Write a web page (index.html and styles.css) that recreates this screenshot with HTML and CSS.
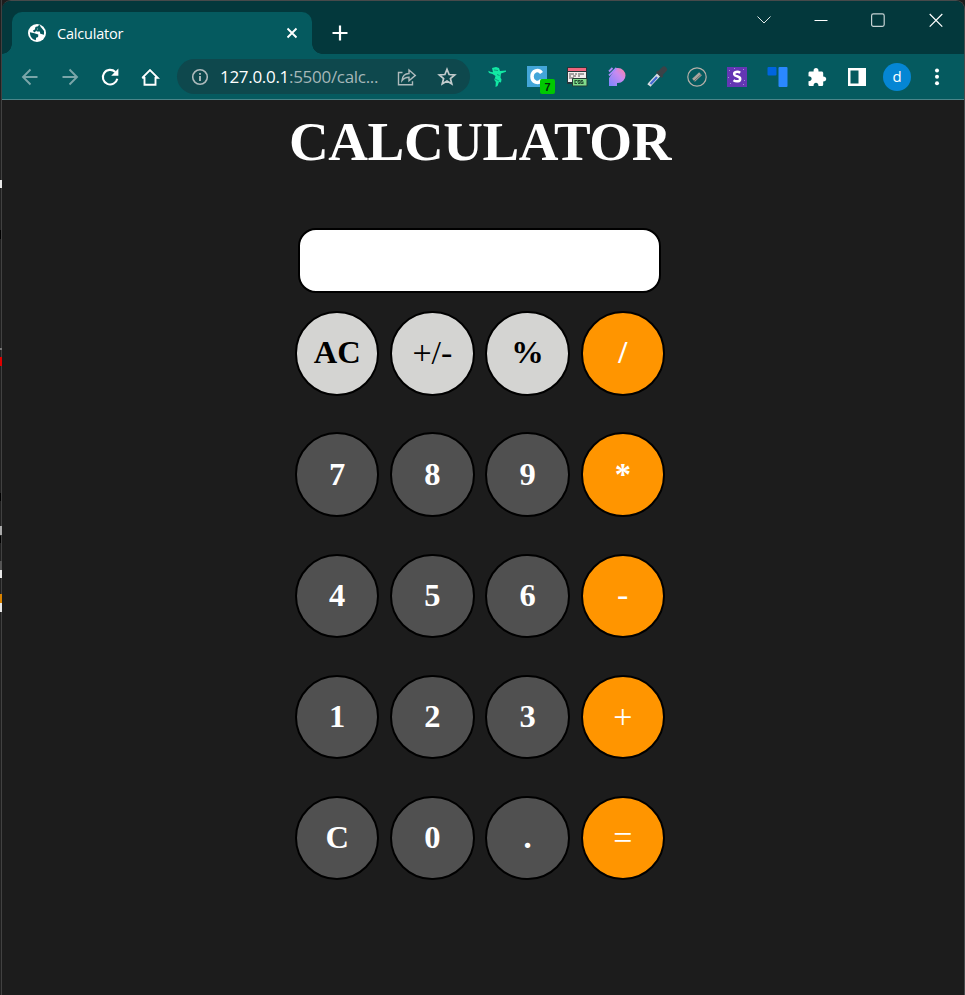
FILE: index.html
```html
<!DOCTYPE html>
<html lang="en">
<head>
<meta charset="utf-8">
<title>Calculator</title>
<link rel="stylesheet" href="styles.css">
</head>
<body>
<div class="edge">
  <svg width="2" height="995" viewBox="0 0 2 995" shape-rendering="crispEdges">
    <path fill="#e8e8e8" d="M0 180h2v8H0zM0 570h2v8H0zM0 603h2v9H0z"/>
    <path fill="#000" d="M0 230h1v9H0zM0 493h1v8H0zM0 536h1v7H0z"/>
    <path fill="#777" d="M0 348h2v2H0z"/>
    <path fill="#e00000" d="M0 357h2v9H0z"/>
    <path fill="#aaa" d="M0 526h2v9H0z"/>
    <path fill="#555" d="M0 561h2v9H0z"/>
    <path fill="#d98200" d="M0 594h2v9H0z"/>
  </svg>
</div>
<div class="window">
  <header class="tabstrip">
    <div class="tab">
      <svg class="globe" width="18" height="18" viewBox="0 0 18 18"><circle cx="9" cy="9" r="9" fill="#fff"/><path fill="none" stroke="#055a5f" stroke-width="2.1" stroke-linejoin="round" d="M12 1.500 10.500 3.200 8.300 3.700 7.800 6.200 5.500 7.500"/><path fill="#055a5f" d="M10 2.200 13 3.300 16 7v3.800l-3.700-1.100-.5-2.300H8.600l1-2.600zM1.900 8.300l4.500 1 3.900 1.300-.2 2.400-2 .7-.3 2.500C4.200 15.500 1.900 12.500 1.900 8.300z"/></svg>
      <span class="tab-title">Calculator</span>
      <svg class="tab-close" width="12" height="12" viewBox="0 0 12 12"><path d="m1.500 1.500 9 9m0-9-9 9" stroke="#fff" stroke-width="1.900"/></svg>
    </div>
    <svg class="new-tab" width="16" height="16" viewBox="0 0 16 16"><path d="M8 .5v15M.5 8h15" stroke="#fff" stroke-width="2.200"/></svg>
    <div class="controls">
      <svg width="14" height="14" viewBox="0 0 14 14"><path d="m.5 3.500 6.500 6.500 6.500-6.500" fill="none" stroke="#e0e8e8"/></svg>
      <svg width="14" height="14" viewBox="0 0 14 14"><path d="M.5 7.500h13" stroke="#fff"/></svg>
      <svg width="14" height="14" viewBox="0 0 14 14"><rect x=".6" y=".9" width="12.600" height="12.400" rx="1.800" fill="none" stroke="#c6d2d3" stroke-width="1.200"/></svg>
      <svg width="14" height="14" viewBox="0 0 14 14"><path d="m.7 1 12.600 12.600m0-12.600L.7 13.600" stroke="#fff" stroke-width="1.200"/></svg>
    </div>
  </header>
  <nav class="toolbar">
    <svg width="20" height="20" viewBox="0 0 20 20"><path d="M17.500 10H3m7.500-7.500L3 10l7.500 7.500" fill="none" stroke="#7ba6a9" stroke-width="1.900"/></svg>
    <svg width="20" height="20" viewBox="0 0 20 20"><path d="M2.500 10H17M9.500 2.500 17 10l-7.500 7.500" fill="none" stroke="#7ba6a9" stroke-width="1.900"/></svg>
    <svg width="20" height="20" viewBox="0 0 20 20"><path d="M15.300 5A7.300 7.300 0 1 0 17.300 11.700" fill="none" stroke="#fff" stroke-width="2.100"/><path d="M18.400 1.600v7.200h-7.200z" fill="#fff"/></svg>
    <svg width="20" height="20" viewBox="0 0 20 20"><path d="M4.500 10v7.700h11V10M2.200 10.800 10 3l7.800 7.800h-2.900M2.200 10.800h2.900" fill="none" stroke="#fff" stroke-width="1.900"/></svg>
    <div class="address">
      <svg width="18" height="18" viewBox="0 0 18 18"><circle cx="9" cy="9" r="7.300" fill="none" stroke="#aebabc" stroke-width="1.600"/><path d="M9 8v5M9 4.900v1.900" stroke="#aebabc" stroke-width="1.900"/></svg>
      <span class="url"><b>127.0.0.1</b>:5500/calc...</span>
      <svg class="share" width="20" height="20" viewBox="0 0 20 20"><path d="M5.500 5.500h-4v12.200h14v-3.500M5 13.500C5.500 9 8 6.500 12 6.500V3l6.300 5.400-6.300 5.400v-3.600c-3 0-5.300 1-7 3.300z" fill="none" stroke="#aebabc" stroke-width="1.400"/></svg>
      <svg width="20" height="20" viewBox="0 0 20 20"><path d="m10 2.300 2.100 5.200 5.600.4-4.300 3.600 1.400 5.500L10 14l-4.800 3 1.400-5.500-4.300-3.600 5.600-.4z" fill="none" stroke="#c2cbcc" stroke-width="1.700"/></svg>
    </div>
    <div class="extensions">
      <svg viewBox="0 0 22 22"><path fill="#12e8a4" d="m6 2 4-1 3 1 1 3 6-.5v1.300l-5 1.700-.5 4 1 2-.5 3-2-.5-1.500 4-2 1 .3-5-1.500-2 1.200-4-3-2-3.500-1-.8-2.200 2.800 1.200 2 .2z"/><path d="m8 4 4 .5m-1 4 2.500 1M9 13l4 2" stroke="#078a75" stroke-width=".8"/></svg>
      <div class="badged">
        <svg viewBox="0 0 22 22"><path fill="#43a5d8" d="M1 0h20v21H1z"/><path d="M15.500 7C12.500 2.500 6 4.500 6 10.500S12.500 18.500 15.500 14" fill="none" stroke="#fff" stroke-width="3.500"/></svg>
        <span class="badge">7</span>
      </div>
      <svg viewBox="0 0 22 22"><path fill="#26373b" d="M1 1h20v17H1z"/><path fill="#ef657d" d="M2 2h18v3H2z"/><path fill="#f4eded" d="M2 6h18v10H2z"/><path d="M3 8h5M9 8h2m1 0h6M3 10h2m2 0h3m2 0h2M3 12h5" stroke="#555" stroke-width="1.200"/><path fill="#81dc8c" stroke="#263c36" d="M6.500 12.500h14.500v7.500H6.500z"/><path d="M11 14.500H9v3h2m3-3h-2v1.500h2v1.500h-2m5-3h-2v1.500h2v1.500h-2" fill="none" stroke="#244f33" stroke-width="1.100"/></svg>
      <svg viewBox="0 0 22 22"><defs><linearGradient id="pen" x1="0" y1="1" x2="1" y2="0"><stop stop-color="#7a86ff"/><stop offset=".6" stop-color="#c98af0"/><stop offset="1" stop-color="#ff829d"/></linearGradient></defs><path fill="url(#pen)" d="M10 2h2a7.500 7.500 0 0 1 0 15h-1v3H3v-8z"/><path d="M3 5.500 6.500 2M3 9.500 10.500 2" stroke="#a98cfa" stroke-width="1.800"/></svg>
      <svg viewBox="0 0 22 22"><path d="m13 8.500-8.500 9-1.500 2" stroke="#d6dbe0" stroke-width="4.200" fill="none"/><path d="m11 11-6.500 7" stroke="#4569d4" stroke-width="2.200"/><path d="m11 5.500 5.500 5.500M13.500 8l4-4" stroke="#3b4247" stroke-width="3"/><path d="m15 6.500 3-3" stroke="#3b4247" stroke-width="6" stroke-linecap="round"/></svg>
      <svg viewBox="0 0 22 22"><circle cx="11" cy="11" r="9.200" fill="none" stroke="#b6afa8" stroke-width="1.200"/><path d="m7.500 14.300 7-6.500" stroke="#aaa49e" stroke-width="4"/><path d="m8 15 7-6.500" stroke="#686965" stroke-width="1"/></svg>
      <svg viewBox="0 0 22 22"><path fill="#6436b4" d="M1 1h20v20H1z"/><path fill="#a58cda" d="M3 4h1v1H3zM17 3h1v1h-1zM18 14h1v1h-1zM4 17h1v1H4zM8 2h1v1H8zM17 18h1v1h-1zM2 11h1v1H2z"/><path d="M14.200 6.800C11.500 5 7.900 6 8.200 8.300c.3 2.500 6 1.500 6 4.600 0 2.700-4 3.200-6.700 1.300" fill="none" stroke="#fff" stroke-width="2.500"/></svg>
      <svg viewBox="0 0 22 22"><rect x="1.500" y="1" width="9" height="8.500" rx="1" fill="#0065df"/><rect x="12.500" y="1" width="9" height="20" rx="1" fill="#2a88ff"/></svg>
      <svg viewBox="0 0 22 22"><path fill="#fff" d="M2.500 7c0-1 .6-1.600 1.600-1.600h3.500C7 1 13 1 12.500 5.400h3c1 0 1.700.7 1.700 1.600v3.400c4 0 4 5 0 5v3c0 1-.7 1.600-1.700 1.600h-3c0-4.200-5-4.200-5 0H4.200c-1 0-1.700-.7-1.700-1.600v-3.200c4.200 0 4.200-5 0-5z"/></svg>
      <svg viewBox="0 0 22 22"><path fill="#fff" fill-rule="evenodd" d="M2 2h18v18H2zM4.500 4.500v13h8v-13z"/></svg>
      <span class="avatar">d</span>
      <svg viewBox="0 0 22 22" fill="#fff"><circle cx="11" cy="4.500" r="2"/><circle cx="11" cy="10.800" r="2"/><circle cx="11" cy="17.200" r="2"/></svg>
    </div>
  </nav>
  <main class="page">
    <h1>CALCULATOR</h1>
    <div class="display"></div>
    <div class="keys">
      <button class="key light">AC</button><button class="key light thin">+/-</button><button class="key light">%</button><button class="key op">/</button>
      <button class="key">7</button><button class="key">8</button><button class="key">9</button><button class="key op">*</button>
      <button class="key">4</button><button class="key">5</button><button class="key">6</button><button class="key op thin">-</button>
      <button class="key">1</button><button class="key">2</button><button class="key">3</button><button class="key op thin">+</button>
      <button class="key">C</button><button class="key">0</button><button class="key">.</button><button class="key op thin">=</button>
    </div>
  </main>
</div>
</body>
</html>
```
FILE: styles.css
```css
* { box-sizing: border-box; }
body {
  margin: 0;
  height: 995px;
  display: flex;
  overflow: hidden;
  background: #1d1d1d;
}
svg { display: block; flex: none; }
.edge {
  width: 2px;
  height: 995px;
  flex: none;
  background: linear-gradient(90deg, #202020 50%, #414141 50%);
}
.window {
  width: 963px;
  height: 995px;
  border-top: 1px solid #474a4b;
  border-right: 1px solid #474a4b;
  border-radius: 9px 9px 0 0;
  overflow: hidden;
  background: #1c1c1c;
  font-family: "Open Sans", "Noto Sans", sans-serif;
}
.tabstrip {
  height: 53px;
  display: flex;
  align-items: flex-start;
  background: #03383c;
}
.tab {
  position: relative;
  display: flex;
  align-items: center;
  width: 300px;
  height: 42px;
  margin: 11px 0 0 10px;
  padding: 0 14px 0 16px;
  border-radius: 10px 10px 0 0;
  background: #055a5f;
}
.tab::before, .tab::after {
  content: "";
  position: absolute;
  bottom: 0;
  width: 10px;
  height: 10px;
}
.tab::before { left: -10px; background: radial-gradient(circle at 0 0, #03383c 9.5px, #055a5f 10px); }
.tab::after { right: -10px; background: radial-gradient(circle at 100% 0, #03383c 9.5px, #055a5f 10px); }
.tab-title {
  margin-left: 11px;
  color: #fff;
  font-size: 14.5px;
  letter-spacing: -0.2px;
}
.tab-close { margin-left: auto; }
.new-tab { margin: 24px 0 0 19.5px; }
.controls {
  display: flex;
  gap: 43.300px;
  margin: 11.500px 21.500px 0 auto;
}
.toolbar {
  display: flex;
  align-items: center;
  height: 46px;
  padding-left: 17.500px;
  gap: 20px;
  border-bottom: 1px solid #4b8589;
  background: #055a5f;
}
.address {
  display: flex;
  align-items: center;
  width: 293px;
  height: 35px;
  margin-left: -2.500px;
  padding: 0 13px 0 13.500px;
  border-radius: 18px;
  background: #0e484d;
}
.url {
  width: 162px;
  margin-left: 11.500px;
  color: #a5b7b9;
  font-size: 17px;
  letter-spacing: -0.3px;
  white-space: nowrap;
}
.url b { color: #fff; font-weight: 400; }
.share { margin: 0 20px 0 15px; }
.extensions {
  display: flex;
  align-items: center;
  margin-left: -4px;
}
.extensions svg { width: 22px; height: 22px; margin-right: 18px; }
.badged { position: relative; }
.badge {
  position: absolute;
  left: 14px;
  top: 13px;
  width: 15px;
  height: 15px;
  border-radius: 2px;
  background: #00c800;
  color: #06250a;
  font: bold 11px/16px "Liberation Sans", sans-serif;
  text-align: center;
}
.avatar {
  width: 28px;
  height: 28px;
  margin: 0 15px 0 -3px;
  border-radius: 50%;
  background: #0586d4;
  color: #fff;
  font-size: 15px;
  line-height: 27px;
  text-align: center;
}
.page {
  display: flex;
  flex-direction: column;
  align-items: center;
  width: 956px;
  font-family: "Liberation Serif", serif;
}
h1 {
  margin: 11px 0 0;
  color: #fff;
  font-size: 55px;
  line-height: 62px;
  letter-spacing: -0.4px;
}
.display {
  width: 363px;
  height: 65px;
  margin: 54.500px 1.500px 0 0;
  border: 2px solid #000;
  border-radius: 18px;
  background: #fff;
}
.keys {
  display: grid;
  grid-template-columns: repeat(4, 84.500px);
  gap: 36.700px 10.700px;
  margin-top: 18.700px;
}
.key {
  width: 84.500px;
  height: 84.500px;
  padding: 0 0 1px;
  border: 2px solid #000;
  border-radius: 50%;
  background: #505050;
  color: #fff;
  font: bold 32.500px "Liberation Serif", serif;
}
.light { background: #d4d4d2; color: #000; }
.op { background: #ff9500; }
.thin { font-weight: 400; font-size: 34px; }
```
